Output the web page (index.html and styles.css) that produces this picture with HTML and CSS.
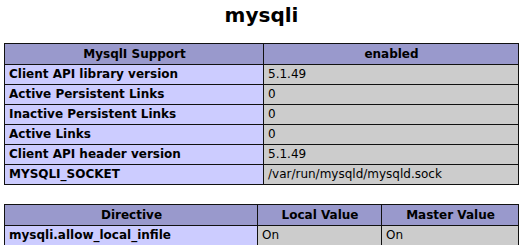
FILE: index.html
```html
<!DOCTYPE html>
<html>
<head>
<meta charset="utf-8">
<link rel="stylesheet" href="styles.css">
</head>
<body>
<div class="center">
  <h2 class="title">mysqli</h2>
  <table class="info">
    <colgroup><col class="c-name"><col></colgroup>
    <tr class="h"><th>MysqlI Support</th><th>enabled</th></tr>
    <tr><td class="e">Client API library version</td><td class="v">5.1.49</td></tr>
    <tr><td class="e">Active Persistent Links</td><td class="v">0</td></tr>
    <tr><td class="e">Inactive Persistent Links</td><td class="v">0</td></tr>
    <tr><td class="e">Active Links</td><td class="v">0</td></tr>
    <tr><td class="e">Client API header version</td><td class="v">5.1.49</td></tr>
    <tr><td class="e">MYSQLI_SOCKET</td><td class="v">/var/run/mysqld/mysqld.sock</td></tr>
  </table>
  <table class="info directives">
    <colgroup><col class="c-dir"><col class="c-local"><col></colgroup>
    <tr class="h"><th>Directive</th><th>Local Value</th><th>Master Value</th></tr>
    <tr><td class="e">mysqli.allow_local_infile</td><td class="v">On</td><td class="v">On</td></tr>
  </table>
</div>
</body>
</html>
```
FILE: styles.css
```css
html, body {
  margin: 0;
  padding: 0;
  background: #ffffff;
  color: #000000;
  font-family: "DejaVu Sans", "Liberation Sans", sans-serif;
}

.center {
  width: 515px;
  margin-left: 4px;
  padding-top: 4px;
}

.title {
  margin: 0 0 16px 0;
  font-size: 20px;
  font-weight: bold;
  text-align: center;
  line-height: 23px;
}

.info {
  width: 515px;
  border-collapse: collapse;
  table-layout: fixed;
  margin: 0 0 19px 0;
}

.directives {
  margin-bottom: 0;
}

.info th,
.info td {
  border: 1px solid #111;
  font-size: 12px;
  line-height: 15px;
  padding: 2px 3px 2px 4px;
  vertical-align: baseline;
  text-align: left;
  white-space: nowrap;
  overflow: hidden;
}

.info th {
  text-align: center;
  padding-top: 3px;
}

.c-name { width: 259px; }
.c-dir { width: 253px; }
.c-local { width: 124px; }

.h th { background: #9999cc; font-weight: bold; }
.e { background: #ccccff; font-weight: bold; }
.v { background: #cccccc; }
```
